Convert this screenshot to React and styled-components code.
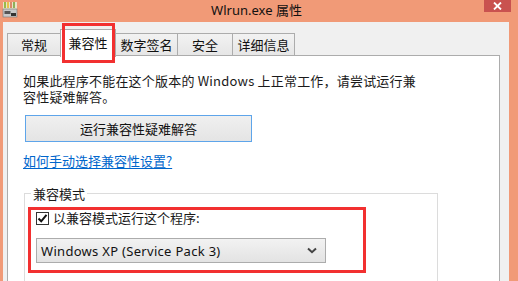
import React from "react";
import styled, { createGlobalStyle } from "styled-components";

const Global = createGlobalStyle`
  html, body { margin: 0; padding: 0; }
  body {
    width: 518px; height: 281px; overflow: hidden;
    background: #f19a77;
    font-family: "Noto Sans CJK SC", "Noto Sans", sans-serif;
    font-size: 13px; color: #1a1a1a;
  }
`;

const Window = styled.div`
  position: relative;
  width: 518px; height: 281px;
  display: flex; flex-direction: column;
  background: #f19a77;
`;

const TitleBar = styled.div`
  height: 22px; flex: none;
  display: grid;
  grid-template-columns: 1fr auto 1fr;
  align-items: start;
  padding: 0 7px 0 2px;
`;

const AppIcon = styled.svg`
  margin-top: 2px;
  width: 16px; height: 16px;
`;

const Title = styled.div`
  font-size: 13px; line-height: 20px;
  color: #111;
  font-family: "Noto Sans", "Noto Sans CJK SC", sans-serif;
`;

const CloseBtn = styled.div`
  justify-self: end;
  width: 27px; height: 12px;
  background: #c9524f;
  display: flex; align-items: center; justify-content: center;
`;

const Body = styled.div`
  flex: 1;
  margin: 0 9px 0 3px;
  background: #f0f0f0;
  padding: 7px 9px 0 4px;
  display: flex; flex-direction: column;
  overflow: hidden;
`;

const TabStrip = styled.div`
  display: flex; align-items: flex-end;
  height: 27px; flex: none;
  position: relative; z-index: 2;
`;

const Tab = styled.div`
  box-sizing: border-box;
  width: ${p => p.$w}px;
  height: ${p => (p.$active ? 28 : 23)}px;
  margin-right: -1px;
  margin-bottom: ${p => (p.$active ? -1 : 0)}px;
  border: 1px solid #acacac;
  border-bottom: ${p => (p.$active ? "none" : "1px solid #acacac")};
  background: ${p => (p.$active ? "#fff" : "linear-gradient(#f2f2f2, #e6e6e6)")};
  display: flex; align-items: center; justify-content: center;
  padding-bottom: ${p => (p.$active ? 2 : 1)}px;
  font-size: 13px; color: #111;
  position: relative;
  z-index: ${p => (p.$active ? 2 : 1)};
`;

const Panel = styled.div`
  flex: 1;
  background: #fff;
  border: 1px solid #acacac;
  border-bottom: none;
  margin-top: -1px;
  padding: 17px 0 0 15px;
  display: flex; flex-direction: column; align-items: flex-start;
`;

const Para = styled.div`
  margin: 0;
  display: flex; flex-direction: column;
  letter-spacing: 0.2px;
`;

const ParaLine = styled.span`
  display: block;
  height: 16px;
  line-height: 16px;
  white-space: nowrap;
`;

const Button = styled.div`
  box-sizing: border-box;
  margin: 10px 0 0 2px;
  width: 227px; height: 27px;
  border: 1px solid #5ea5ea;
  background: linear-gradient(#f0f0f0, #e4e4e4);
  display: flex; align-items: center; justify-content: center;
  font-size: 13px; color: #111;
`;

const Link = styled.a`
  margin-top: 11px;
  line-height: 16px;
  color: #0066cc;
  text-decoration: underline;
  text-underline-offset: 2px;
`;

const Group = styled.fieldset`
  margin: 16px 0 0 1px;
  padding: 0 6px 30px;
  width: 400px;
  border: 1px solid #dcdcdc;
`;

const Legend = styled.legend`
  padding: 0 2px;
  line-height: 17px;
`;

const GroupInner = styled.div`
  padding-left: 5px;
  display: flex; flex-direction: column; align-items: flex-start;
`;

const CheckRow = styled.label`
  margin-top: 8px;
  display: flex; align-items: center; gap: 4px;
  line-height: 16px;
`;

const Box = styled.span`
  box-sizing: border-box;
  width: 13px; height: 13px;
  border: 1px solid #333;
  background: #fff;
  display: flex; align-items: center; justify-content: center;
`;

const Select = styled.div`
  box-sizing: border-box;
  margin-top: 12px;
  width: 290px; height: 25px;
  border: 1px solid #acacac;
  background: linear-gradient(#f2f2f2, #e3e3e3);
  display: flex; align-items: center; justify-content: space-between;
  padding: 0 8px 0 4px;
  font-family: "Noto Sans", "Noto Sans CJK SC", sans-serif;
  font-size: 13px; letter-spacing: 0.3px; color: #111;
`;

const RedMark = styled.div`
  position: absolute;
  box-sizing: border-box;
  border: 3px solid #f23030;
  z-index: 5;
  pointer-events: none;
`;

export default function App() {
  return (
    <>
      <Global />
      <Window>
        <TitleBar>
          <AppIcon viewBox="0 0 16 16">
            <rect x="1" y="0" width="14" height="7" fill="#e9e4c8" />
            <rect x="2" y="0" width="2" height="6" fill="#9ab94a" />
            <rect x="5" y="0" width="2" height="6" fill="#e6c24a" />
            <rect x="8" y="0" width="2" height="6" fill="#d98a6a" />
            <rect x="11" y="0" width="2" height="6" fill="#8fb05a" />
            <rect x="1" y="7" width="14" height="8" fill="#c9c9c9" stroke="#777" strokeWidth="0.6" />
            <rect x="2.5" y="9" width="6" height="3" fill="#555" />
            <rect x="9" y="11" width="5" height="3" fill="#333" />
          </AppIcon>
          <Title>Wlrun.exe 属性</Title>
          <CloseBtn>
            <svg width="9" height="8" viewBox="0 0 9 8">
              <path d="M1 0.5 L8 7.5 M8 0.5 L1 7.5" stroke="#fff" strokeWidth="1.8" />
            </svg>
          </CloseBtn>
        </TitleBar>
        <Body>
          <TabStrip>
            <Tab $w={54}>常规</Tab>
            <Tab $w={56} $active>兼容性</Tab>
            <Tab $w={63}>数字签名</Tab>
            <Tab $w={56}>安全</Tab>
            <Tab $w={63}>详细信息</Tab>
          </TabStrip>
          <Panel>
            <Para>
              <ParaLine>如果此程序不能在这个版本的 Windows 上正常工作，请尝试运行兼</ParaLine>
              <ParaLine>容性疑难解答。</ParaLine>
            </Para>
            <Button>运行兼容性疑难解答</Button>
            <Link>如何手动选择兼容性设置?</Link>
            <Group>
              <Legend>兼容模式</Legend>
              <GroupInner>
                <CheckRow>
                  <Box>
                    <svg width="11" height="11" viewBox="0 0 11 11">
                      <path d="M1.5 5.5 L4.2 8.3 L9.5 1.8" fill="none" stroke="#111" strokeWidth="2" />
                    </svg>
                  </Box>
                  以兼容模式运行这个程序:
                </CheckRow>
                <Select>
                  <span>Windows XP (Service Pack 3)</span>
                  <svg width="10" height="7" viewBox="0 0 10 7">
                    <path d="M1 1.5 L5 5.2 L9 1.5" fill="none" stroke="#444" strokeWidth="2" />
                  </svg>
                </Select>
              </GroupInner>
            </Group>
          </Panel>
        </Body>
        <RedMark style={{ left: 62, top: 23, width: 53, height: 40 }} />
        <RedMark style={{ left: 28, top: 207, width: 338, height: 66 }} />
      </Window>
    </>
  );
}
